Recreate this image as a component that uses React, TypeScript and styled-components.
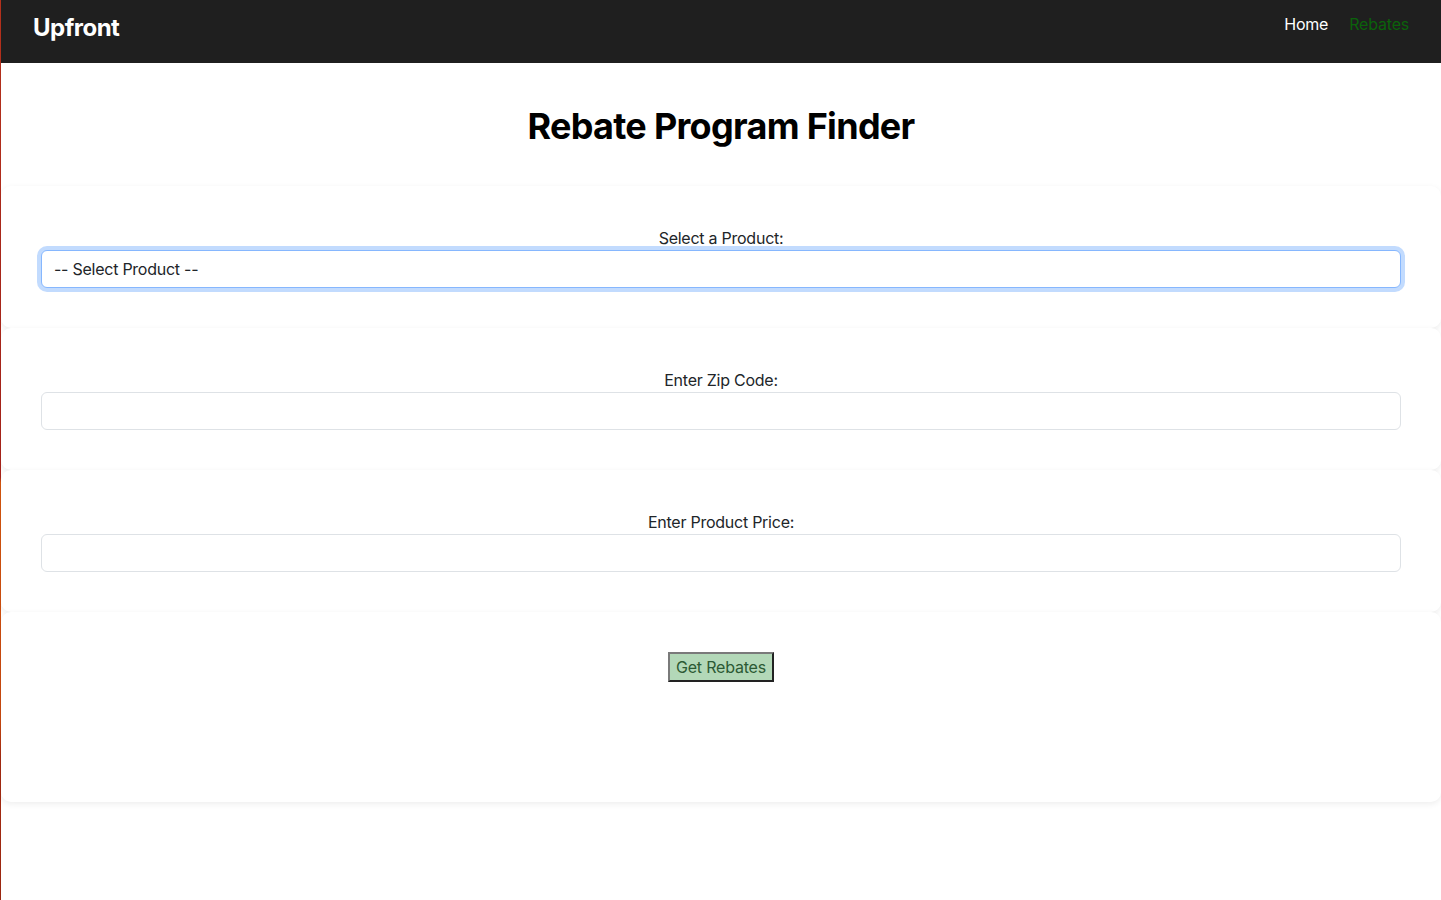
import React, { useState } from "react";
import styled, { createGlobalStyle } from "styled-components";

const GlobalStyle = createGlobalStyle`
  html, body {
    margin: 0;
    padding: 0;
    background: #ffffff;
  }
  body {
    font-family: Inter, "Noto Sans", "Liberation Sans", sans-serif;
    color: #212529;
    font-size: 16px;
    line-height: 1.5;
  }
  * { box-sizing: border-box; }
`;

const Page = styled.div`
  min-height: 900px;
  border-left: 1px solid #a8261a;
  border-image: linear-gradient(
      to bottom,
      #b3311c 0%,
      #a8231a 53%,
      #d4560e 53.6%,
      #c8480f 80%,
      #a52b12 84%,
      #9a2710 100%
    )
    1;
`;

const NavBar = styled.nav`
  height: 63px;
  background: #1f1f1f;
  display: flex;
  justify-content: space-between;
  align-items: flex-start;
  padding: 0 32px 0 32px;
`;

const Brand = styled.div`
  color: #ffffff;
  font-size: 24px;
  font-weight: 700;
  letter-spacing: -0.5px;
  line-height: 29px;
  margin-top: 13px;
`;

const NavLinks = styled.div`
  display: flex;
  gap: 21px;
  margin-top: 12px;
`;

const NavLink = styled.a<{ $active?: boolean }>`
  color: ${(p) => (p.$active ? "#0b620b" : "#ffffff")};
  text-decoration: none;
  font-size: 16px;
  line-height: 24px;
  letter-spacing: -0.2px;
  cursor: pointer;
`;

const Title = styled.h1`
  margin: 0;
  padding: 41px 0 38px;
  text-align: center;
  font-size: 36px;
  font-weight: 700;
  line-height: 44px;
  letter-spacing: -0.7px;
  color: #000;
`;

const Card = styled.section`
  background: #fff;
  border-radius: 10px;
  box-shadow: 0 2px 6px rgba(0, 0, 0, 0.07);
  padding: 40px;
  display: flex;
  flex-direction: column;
  align-items: stretch;
`;

const Label = styled.label`
  display: block;
  text-align: center;
  font-size: 16px;
  line-height: 24px;
  letter-spacing: -0.25px;
  color: #212529;
`;

const fieldBase = `
  display: block;
  width: 100%;
  height: 38px;
  padding: 6px 12px;
  font-family: Inter, "Noto Sans", "Liberation Sans", sans-serif;
  font-size: 16px;
  line-height: 24px;
  letter-spacing: -0.25px;
  color: #212529;
  background: #fff;
  border: 1px solid #dee2e6;
  border-radius: 6px;
  outline: none;
`;

const Select = styled.select<{ $focused?: boolean }>`
  ${fieldBase}
  appearance: none;
  -webkit-appearance: none;
  border-color: ${(p) => (p.$focused ? "#86b7fe" : "#dee2e6")};
  box-shadow: ${(p) =>
    p.$focused ? "0 0 0 4px rgba(13, 110, 253, 0.25)" : "none"};
`;

const Input = styled.input`
  ${fieldBase}
  &:focus {
    border-color: #86b7fe;
    box-shadow: 0 0 0 4px rgba(13, 110, 253, 0.25);
  }
`;

const ButtonRow = styled.div`
  display: flex;
  justify-content: center;
`;

const Button = styled.button`
  font-family: Inter, "Noto Sans", "Liberation Sans", sans-serif;
  font-size: 16px;
  line-height: 22px;
  letter-spacing: -0.2px;
  height: 30px;
  padding: 2px 6px;
  color: #2c5a34;
  background: #b3d8b8;
  border: 2px solid;
  border-color: #7a7a7a #222222 #222222 #7a7a7a;
  cursor: pointer;
`;

const Results = styled.div`
  min-height: 80px;
`;

export default function App() {
  const [product, setProduct] = useState("");
  const [zip, setZip] = useState("");
  const [price, setPrice] = useState("");

  return (
    <Page>
      <GlobalStyle />
      <NavBar>
        <Brand>Upfront</Brand>
        <NavLinks>
          <NavLink>Home</NavLink>
          <NavLink $active>Rebates</NavLink>
        </NavLinks>
      </NavBar>
      <Title>Rebate Program Finder</Title>
      <Card>
        <Label htmlFor="product">Select a Product:</Label>
        <Select
          id="product"
          $focused
          value={product}
          onChange={(e) => setProduct(e.target.value)}
        >
          <option value="">-- Select Product --</option>
          <option value="heat-pump">Heat Pump</option>
          <option value="water-heater">Water Heater</option>
        </Select>
      </Card>
      <Card>
        <Label htmlFor="zip">Enter Zip Code:</Label>
        <Input id="zip" value={zip} onChange={(e) => setZip(e.target.value)} />
      </Card>
      <Card>
        <Label htmlFor="price">Enter Product Price:</Label>
        <Input
          id="price"
          value={price}
          onChange={(e) => setPrice(e.target.value)}
        />
      </Card>
      <Card>
        <ButtonRow>
          <Button>Get Rebates</Button>
        </ButtonRow>
        <Results />
      </Card>
    </Page>
  );
}
